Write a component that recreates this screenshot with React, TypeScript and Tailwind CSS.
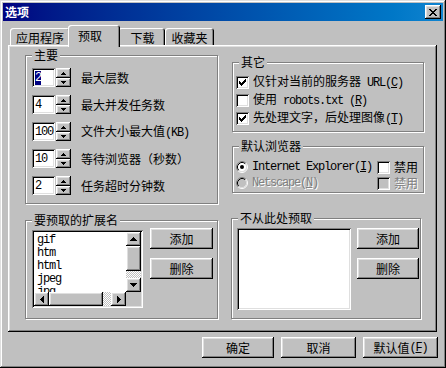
import React from 'react'

const raised = 'shadow-[inset_-1px_-1px_0_#000,inset_1px_1px_0_#fff,inset_-2px_-2px_0_#808080,inset_2px_2px_0_#dfdfdf]'
const sunken = 'shadow-[inset_1px_1px_0_#808080,inset_-1px_-1px_0_#fff,inset_2px_2px_0_#000,inset_-2px_-2px_0_#dfdfdf]'
const mono = "font-['Liberation_Mono',monospace] text-[12px] tracking-[-1.2px]"
const grayText = 'text-[#808080] [text-shadow:1px_1px_0_#fff]'
const checker = 'bg-[image:repeating-conic-gradient(#fff_0_25%,#c0c0c0_0_50%)] bg-[length:2px_2px]'

const ARROW_UP = ['...X...', '..XXX..', '.XXXXX.', 'XXXXXXX']
const ARROW_DOWN = ['XXXXXXX', '.XXXXX.', '..XXX..', '...X...']
const ARROW_LEFT = ['...X', '..XX', '.XXX', 'XXXX', '.XXX', '..XX', '...X']
const ARROW_RIGHT = ['X...', 'XX..', 'XXX.', 'XXXX', 'XXX.', 'XX..', 'X...']
const SPIN_UP = ['..X..', '.XXX.', 'XXXXX']
const SPIN_DOWN = ['XXXXX', '.XXX.', '..X..']
const CLOSE_X = ['XX....XX', '.XX..XX.', '..XXXX..', '...XX...', '..XXXX..', '.XX..XX.', 'XX....XX']
const CHECK = ['......X', '.....XX', 'X...XXX', 'XX.XXX.', 'XXXXX..', '.XXX...', '..X....']

function Pix({ rows, color = '#000' }: { rows: string[]; color?: string }) {
  const w = rows[0].length
  const h = rows.length
  return (
    <svg width={w} height={h} viewBox={`0 0 ${w} ${h}`} shapeRendering="crispEdges" className="block">
      {rows.flatMap((r, y) =>
        r.split('').map((c, x) =>
          c === 'X' ? <rect key={`${x}-${y}`} x={x} y={y} width={1} height={1} fill={color} /> : null
        )
      )}
    </svg>
  )
}

function Mono({ children, className = '' }: { children: React.ReactNode; className?: string }) {
  return <span className={`${mono} ${className}`}>{children}</span>
}

function Group({ title, className = '', children }: { title: string; className?: string; children?: React.ReactNode }) {
  return (
    <div className={`flex flex-col border border-[#808080] shadow-[1px_1px_0_#fff,inset_1px_1px_0_#fff] ${className}`}>
      <span className="-mt-[8px] ml-[6px] h-[14px] self-start bg-[#c0c0c0] px-[2px] leading-[14px]">{title}</span>
      {children}
    </div>
  )
}

function Button({ children, className = '' }: { children: React.ReactNode; className?: string }) {
  return (
    <div className={`flex h-[21px] items-center justify-center bg-[#c0c0c0] ${raised} ${className}`}>{children}</div>
  )
}

function Check({ checked = false, disabled = false }: { checked?: boolean; disabled?: boolean }) {
  return (
    <span className={`flex h-[13px] w-[13px] shrink-0 items-center justify-center ${disabled ? 'bg-[#c0c0c0]' : 'bg-white'} ${sunken}`}>
      {checked && <Pix rows={CHECK} />}
    </span>
  )
}

function Radio({ on = false, disabled = false }: { on?: boolean; disabled?: boolean }) {
  return (
    <svg width="12" height="12" viewBox="0 0 12 12" className="block shrink-0">
      <circle cx="6" cy="6" r="4.5" fill={disabled ? '#c0c0c0' : '#fff'} />
      <path d="M2.11 9.89 A5.5 5.5 0 0 1 9.89 2.11" fill="none" stroke="#808080" />
      <path d="M9.89 2.11 A5.5 5.5 0 0 1 2.11 9.89" fill="none" stroke="#fff" />
      <path d="M2.82 9.18 A4.5 4.5 0 0 1 9.18 2.82" fill="none" stroke="#000" />
      <path d="M9.18 2.82 A4.5 4.5 0 0 1 2.82 9.18" fill="none" stroke="#dfdfdf" />
      {on && <circle cx="6" cy="6" r="2" fill="#000" />}
    </svg>
  )
}

function Spinner({ value, selected = false }: { value: string; selected?: boolean }) {
  return (
    <div className="flex">
      <div className={`flex h-[19px] w-[23px] items-center bg-white pl-[3px] ${sunken}`}>
        <Mono className={selected ? 'bg-[#000080] text-white' : ''}>{value}</Mono>
      </div>
      <div className="ml-[1px] flex w-[15px] flex-col">
        <div className={`flex h-[10px] items-center justify-center bg-[#c0c0c0] ${raised}`}>
          <Pix rows={SPIN_UP} />
        </div>
        <div className={`flex h-[9px] items-center justify-center bg-[#c0c0c0] ${raised}`}>
          <Pix rows={SPIN_DOWN} />
        </div>
      </div>
    </div>
  )
}

function ScrollBtn({ rows, className = '' }: { rows: string[]; className?: string }) {
  return (
    <div className={`flex shrink-0 items-center justify-center bg-[#c0c0c0] ${raised} ${className}`}>
      <Pix rows={rows} />
    </div>
  )
}

const mainRows: { value: string; label: React.ReactNode; selected?: boolean }[] = [
  { value: '2', label: '最大层数', selected: true },
  { value: '4', label: '最大并发任务数' },
  { value: '100', label: <>文件大小最大值<Mono>(KB)</Mono></> },
  { value: '10', label: '等待浏览器（秒数）' },
  { value: '2', label: '任务超时分钟数' },
]

const extensions = ['gif', 'htm', 'html', 'jpeg', 'jpg']

const tabBase =
  'flex items-center justify-center bg-[#c0c0c0] rounded-t-[3px] shadow-[inset_1px_1px_0_#fff,inset_-1px_0_0_#000,inset_-2px_0_0_#808080]'

export default function App() {
  return (
    <div className="flex h-[368px] w-[446px] flex-col bg-[#c0c0c0] p-[3px] font-['Noto_Sans_CJK_SC',sans-serif] text-[12px] leading-[14px] text-black shadow-[inset_-1px_-1px_0_#000,inset_1px_1px_0_#dfdfdf,inset_-2px_-2px_0_#808080,inset_2px_2px_0_#fff]">
      {/* title bar */}
      <div className="flex h-[18px] items-center justify-between bg-linear-to-r from-[#000080] to-[#1084d0] px-[2px]">
        <span className="font-bold text-white">选项</span>
        <div className={`flex h-[14px] w-[16px] items-center justify-center bg-[#c0c0c0] ${raised}`}>
          <Pix rows={CLOSE_X} />
        </div>
      </div>

      <div className="flex flex-col px-[5px]">
        {/* tabs */}
        <div className="flex h-[24px] items-end pl-[2px]">
          <div className={`${tabBase} h-[17px] w-[60px] pt-[2px]`}>应用程序</div>
          <div className={`${tabBase} relative z-10 -mx-[2px] -mb-[2px] h-[22px] w-[52px] pr-[8px]`}>预取</div>
          <div className={`${tabBase} h-[17px] w-[47px] pl-[2px] pt-[2px]`}>下载</div>
          <div className={`${tabBase} h-[17px] w-[49px] pt-[2px]`}>收藏夹</div>
        </div>

        {/* panel */}
        <div className={`flex h-[287px] w-[429px] bg-[#c0c0c0] pl-[17px] pt-[10px] ${raised}`}>
          {/* left column */}
          <div className="flex w-[193px] flex-col">
            <Group title="主要" className="h-[149px]">
              <div className="mt-[6px] flex flex-col gap-[8px] pl-[6px]">
                {mainRows.map((r, i) => (
                  <div key={i} className="flex h-[19px] items-center">
                    <Spinner value={r.value} selected={r.selected} />
                    <span className="ml-[10px]">{r.label}</span>
                  </div>
                ))}
              </div>
            </Group>

            <Group title="要预取的扩展名" className="mt-[16px] h-[99px]">
              <div className="flex items-start pl-[6px]">
                <div className={`mt-[3px] flex h-[78px] w-[111px] flex-col bg-white p-[2px] ${sunken}`}>
                  <div className="flex h-[60px]">
                    <div className="flex flex-1 flex-col overflow-hidden pl-[3px] pt-[2px]">
                      {extensions.map((e) => (
                        <Mono key={e} className="h-[13px] shrink-0 leading-[13px]">{e}</Mono>
                      ))}
                    </div>
                    <div className="flex w-[15px] flex-col">
                      <ScrollBtn rows={ARROW_UP} className="h-[14px]" />
                      <div className={`h-[25px] bg-[#c0c0c0] ${raised}`} />
                      <div className={`flex-1 ${checker}`} />
                      <ScrollBtn rows={ARROW_DOWN} className="h-[14px]" />
                    </div>
                  </div>
                  <div className="flex h-[14px]">
                    <ScrollBtn rows={ARROW_LEFT} className="w-[15px]" />
                    <div className={`w-[54px] bg-[#c0c0c0] ${raised}`} />
                    <div className={`flex-1 ${checker}`} />
                    <ScrollBtn rows={ARROW_RIGHT} className="w-[15px]" />
                    <div className="w-[15px] bg-[#c0c0c0]" />
                  </div>
                </div>
                <div className="ml-[7px] mt-[1px] flex flex-col gap-[9px]">
                  <Button className="w-[63px]">添加</Button>
                  <Button className="w-[63px]">删除</Button>
                </div>
              </div>
            </Group>
          </div>

          {/* right column */}
          <div className="ml-[14px] flex w-[192px] flex-col pt-[7px]">
            <Group title="其它" className="h-[70px]">
              <div className="mt-[4px] flex flex-col pl-[3px]">
                <div className="flex h-[18px] items-center gap-[4px]">
                  <Check checked />
                  <span>仅针对当前的服务器<Mono> URL(<u>C</u>)</Mono></span>
                </div>
                <div className="flex h-[18px] items-center gap-[4px]">
                  <Check />
                  <span>使用<Mono> robots.txt (<u>R</u>)</Mono></span>
                </div>
                <div className="flex h-[18px] items-center gap-[4px]">
                  <Check checked />
                  <span>先处理文字，后处理图像<Mono>(<u>T</u>)</Mono></span>
                </div>
              </div>
            </Group>

            <Group title="默认浏览器" className="mt-[14px] h-[47px]">
              <div className="mt-[6px] flex flex-col pl-[3px]">
                <div className="flex h-[16px] items-center">
                  <Radio on />
                  <Mono className="ml-[4px] w-[125px]">Internet Explorer(<u>I</u>)</Mono>
                  <Check />
                  <span className="ml-[4px]">禁用</span>
                </div>
                <div className="flex h-[16px] items-center">
                  <Radio disabled />
                  <Mono className={`ml-[4px] w-[125px] ${grayText}`}>Netscape(<u>N</u>)</Mono>
                  <Check disabled />
                  <span className={`ml-[4px] ${grayText}`}>禁用</span>
                </div>
              </div>
            </Group>

            <Group title="不从此处预取" className="-ml-[1px] mt-[25px] h-[101px] w-[190px]">
              <div className="flex items-start pl-[5px]">
                <div className={`mt-[3px] h-[82px] w-[114px] bg-white ${sunken}`} />
                <div className="ml-[6px] mt-[3px] flex flex-col gap-[9px]">
                  <Button className="w-[62px]">添加</Button>
                  <Button className="w-[62px]">删除</Button>
                </div>
              </div>
            </Group>
          </div>
        </div>

        {/* dialog buttons */}
        <div className="mt-[5px] flex justify-end gap-[7px]">
          <Button className="w-[72px]">确定</Button>
          <Button className="w-[75px]">取消</Button>
          <Button className="w-[75px]">
            默认值<Mono>(<u>F</u>)</Mono>
          </Button>
        </div>
      </div>
    </div>
  )
}
